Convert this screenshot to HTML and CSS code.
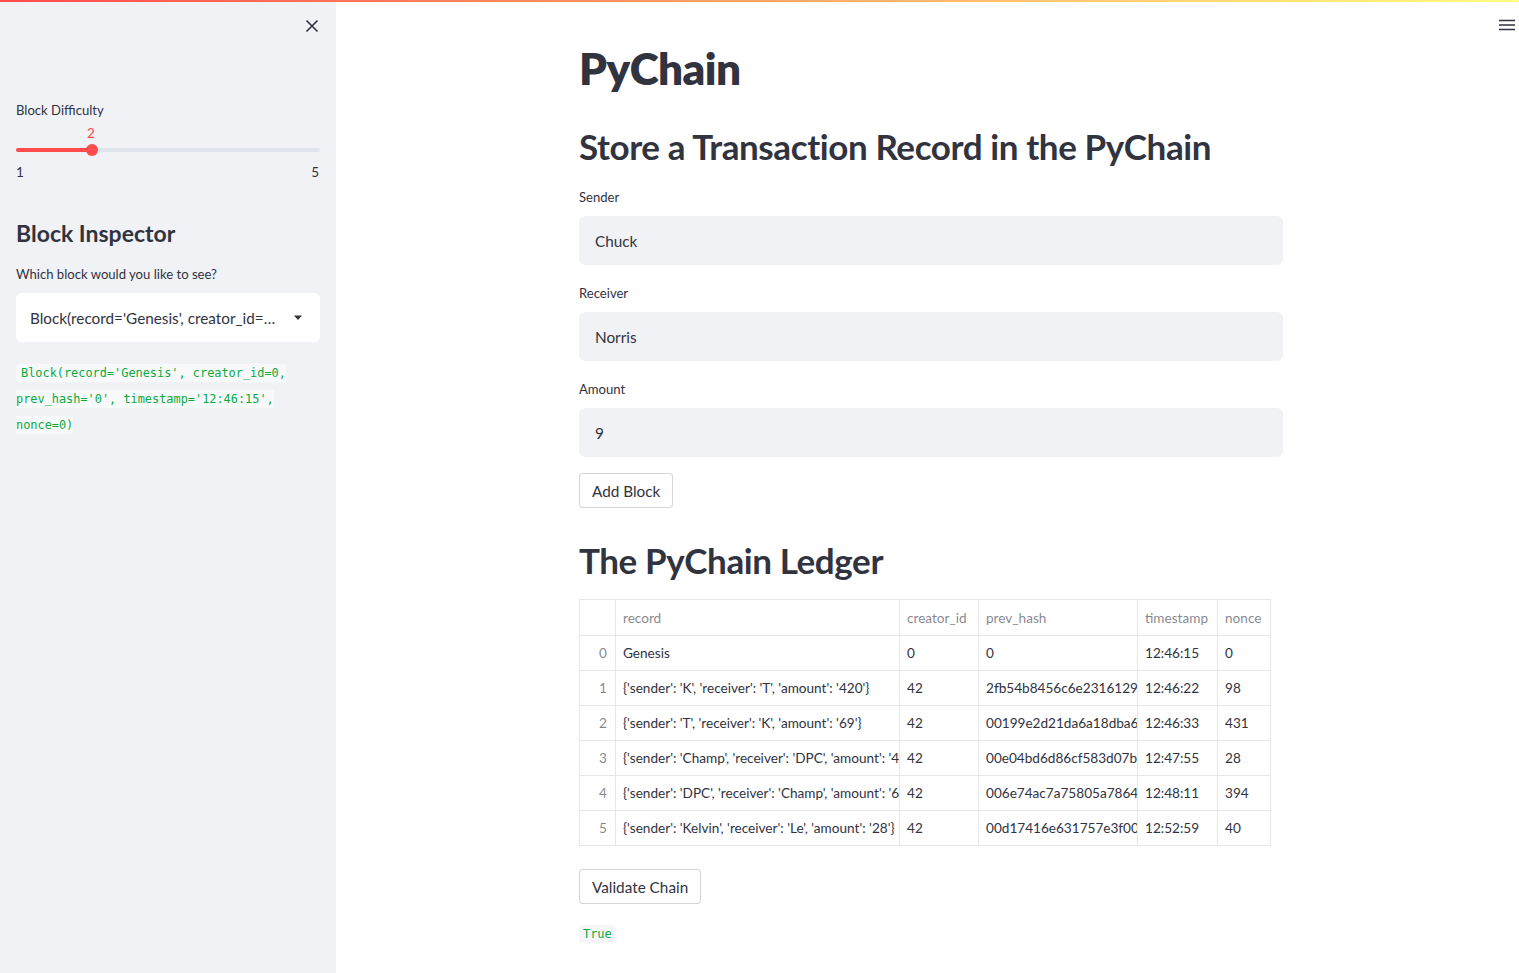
FILE: index.html
```html
<!DOCTYPE html>
<html>
<head>
<meta charset="utf-8">
<link rel="stylesheet" href="styles.css">
</head>
<body>
<div class="decoration"></div>
<div class="app">
  <aside class="sidebar">
    <div class="sb-top">
      <svg class="close" width="16" height="16" viewBox="0 0 16 16"><path d="M2.5 2.5 L13.5 13.5 M13.5 2.5 L2.5 13.5" stroke="#31333f" stroke-width="1.6" fill="none"/></svg>
    </div>
    <div class="widget-label">Block Difficulty</div>
    <div class="slider">
      <div class="slider-value">2</div>
      <div class="track"><div class="fill"></div><div class="thumb"></div></div>
      <div class="ticks"><span>1</span><span>5</span></div>
    </div>
    <h3 class="sb-h">Block Inspector</h3>
    <div class="widget-label">Which block would you like to see?</div>
    <div class="select">
      <span class="select-text">Block(record='Genesis', creator_id=…</span>
      <svg width="10" height="6" viewBox="0 0 10 6"><path d="M1 0.5 L9 0.5 L5 5 Z" fill="#31333f"/></svg>
    </div>
    <p class="sb-code"><code>Block(record='Genesis', creator_id=0, prev_hash='0', timestamp='12:46:15', nonce=0)</code></p>
  </aside>
  <main class="main">
    <div class="block">
      <h1>PyChain</h1>
      <h2 class="h2-first">Store a Transaction Record in the PyChain</h2>
      <div class="field">
        <div class="widget-label">Sender</div>
        <div class="input">Chuck</div>
      </div>
      <div class="field">
        <div class="widget-label">Receiver</div>
        <div class="input">Norris</div>
      </div>
      <div class="field">
        <div class="widget-label">Amount</div>
        <div class="input">9</div>
      </div>
      <button class="btn btn-add">Add Block</button>
      <h2 class="h2-ledger">The PyChain Ledger</h2>
      <table class="grid">
        <colgroup>
          <col class="c-idx"><col class="c-rec"><col class="c-cid"><col class="c-hash"><col class="c-ts"><col class="c-nonce">
        </colgroup>
        <thead>
          <tr><th></th><th>record</th><th>creator_id</th><th>prev_hash</th><th>timestamp</th><th>nonce</th></tr>
        </thead>
        <tbody>
          <tr><td class="idx">0</td><td>Genesis</td><td>0</td><td>0</td><td>12:46:15</td><td>0</td></tr>
          <tr><td class="idx">1</td><td>{'sender': 'K', 'receiver': 'T', 'amount': '420'}</td><td>42</td><td>2fb54b8456c6e2316129fca8</td><td>12:46:22</td><td>98</td></tr>
          <tr><td class="idx">2</td><td>{'sender': 'T', 'receiver': 'K', 'amount': '69'}</td><td>42</td><td>00199e2d21da6a18dba6d3</td><td>12:46:33</td><td>431</td></tr>
          <tr><td class="idx">3</td><td>{'sender': 'Champ', 'receiver': 'DPC', 'amount': '42'}</td><td>42</td><td>00e04bd6d86cf583d07b0e2</td><td>12:47:55</td><td>28</td></tr>
          <tr><td class="idx">4</td><td>{'sender': 'DPC', 'receiver': 'Champ', 'amount': '69'}</td><td>42</td><td>006e74ac7a75805a7864358</td><td>12:48:11</td><td>394</td></tr>
          <tr><td class="idx">5</td><td>{'sender': 'Kelvin', 'receiver': 'Le', 'amount': '28'}</td><td>42</td><td>00d17416e631757e3f00556</td><td>12:52:59</td><td>40</td></tr>
        </tbody>
      </table>
      <button class="btn btn-validate">Validate Chain</button>
      <p class="result"><code>True</code></p>
    </div>
  </main>
  <svg class="menu" width="16" height="12" viewBox="0 0 16 12"><path d="M0 1.5 H16 M0 6 H16 M0 10.5 H16" stroke="#31333f" stroke-width="1.6"/></svg>
</div>
</body>
</html>
```
FILE: styles.css
```css
* { box-sizing: border-box; }
html, body { margin: 0; padding: 0; }
body {
  font-family: Lato, "Noto Sans", sans-serif;
  color: #31333f;
  background: #fff;
  width: 1519px;
  height: 973px;
  overflow: hidden;
}
.decoration {
  position: absolute;
  top: 0; left: 0; right: 0;
  height: 2px;
  background: linear-gradient(90deg, #ff4b4b, #fffd80);
  z-index: 5;
}
.app { display: flex; height: 973px; position: relative; }
.sidebar {
  width: 336px;
  flex: none;
  background: #f0f2f6;
  padding: 0 16px;
}
.sb-top { height: 100px; display: flex; justify-content: flex-end; padding-top: 18px; }
.widget-label { font-size: 13.1px; line-height: 20px; }
.slider { margin-top: 2px; height: 70px; position: relative; }
.slider-value { position: absolute; left: 75px; top: 3px; width: 0; display: flex; justify-content: center; color: #ff4b4b; font-size: 13.5px; line-height: 16px; }
.track { position: absolute; top: 26px; left: 0; right: 0; height: 4px; background: #dfe3eb; border-radius: 2px; }
.fill { position: absolute; left: 0; top: 0; width: 76px; height: 4px; background: #ff4b4b; border-radius: 2px; }
.thumb { position: absolute; left: 70px; top: -4px; width: 12px; height: 12px; border-radius: 50%; background: #ff4b4b; }
.ticks { position: absolute; top: 40px; left: 0; right: 0; display: flex; justify-content: space-between; font-size: 13.5px; line-height: 20px; padding: 0 1px 0 0; }
.sb-h { font-size: 23px; font-weight: 700; margin: 26px 0 16px; line-height: 30px; }
.sb-h + .widget-label { margin-top: 2px; }
.select {
  margin-top: 9px;
  height: 49px;
  background: #fff;
  border-radius: 6px;
  display: flex;
  align-items: center;
  justify-content: space-between;
  padding: 0 17px 0 14px;
  font-size: 15.3px;
}
.sb-code { margin: 18px 0 0; line-height: 25px; font-size: 12px; }
code {
  font-family: "DejaVu Sans Mono", "Liberation Mono", monospace;
  color: #09ab3b;
  background: #f8f9fb;
  padding: 2px 0 2px 5px;
  border-radius: 4px;
  font-size: 11.9px;
}
.main { flex: 1; padding-left: 7px; }
.block { width: 736px; padding: 0 16px; margin: 0 auto; }
h1 { font-size: 44px; font-weight: 800; margin: 40px 0 0; line-height: 56px; letter-spacing: -0.5px; }
h2 { font-size: 35px; font-weight: 700; line-height: 44px; margin: 0; letter-spacing: -0.4px; }
.h2-first { margin-top: 28px; margin-bottom: 19px; }
.field { margin-bottom: 18px; }
.field .widget-label { margin-bottom: 9px; }
.input {
  height: 49px;
  background: #f0f2f6;
  border-radius: 6px;
  display: flex;
  align-items: center;
  padding-left: 16px;
  font-size: 15.3px;
}
.btn {
  font-family: inherit;
  font-size: 15.3px;
  color: #31333f;
  background: #fff;
  border: 1px solid rgba(49,51,63,0.2);
  border-radius: 4px;
  height: 35px;
  padding: 0 12px;
  display: block;
}
.btn-add { margin-top: -2px; }
.h2-ledger { margin-top: 30px; margin-bottom: 17px; }
.grid {
  border-collapse: collapse;
  table-layout: fixed;
  width: 691px;
  font-size: 13.6px;
  border: 1px solid #e6e7ea;
}
.c-idx { width: 36px; }
.c-rec { width: 284px; }
.c-cid { width: 79px; }
.c-hash { width: 159px; }
.c-ts { width: 80px; }
.c-nonce { width: 53px; }
.grid th, .grid td {
  border: 1px solid #e6e7ea;
  height: 35px;
  padding: 0 0 0 7px;
  text-align: left;
  white-space: nowrap;
  overflow: hidden;
  font-weight: 400;
}
.grid th { height: 36px; color: rgba(49,51,63,0.6); }
.grid td.idx { color: rgba(49,51,63,0.6); text-align: right; padding: 0 8px 0 0; }
.btn-validate { margin-top: 23px; }
.result { margin: 22px 0 0; font-size: 12px; }
.result code { padding: 2px 4px; background: #f5f6f8; }
.menu { position: absolute; right: 4px; top: 19px; }
```
